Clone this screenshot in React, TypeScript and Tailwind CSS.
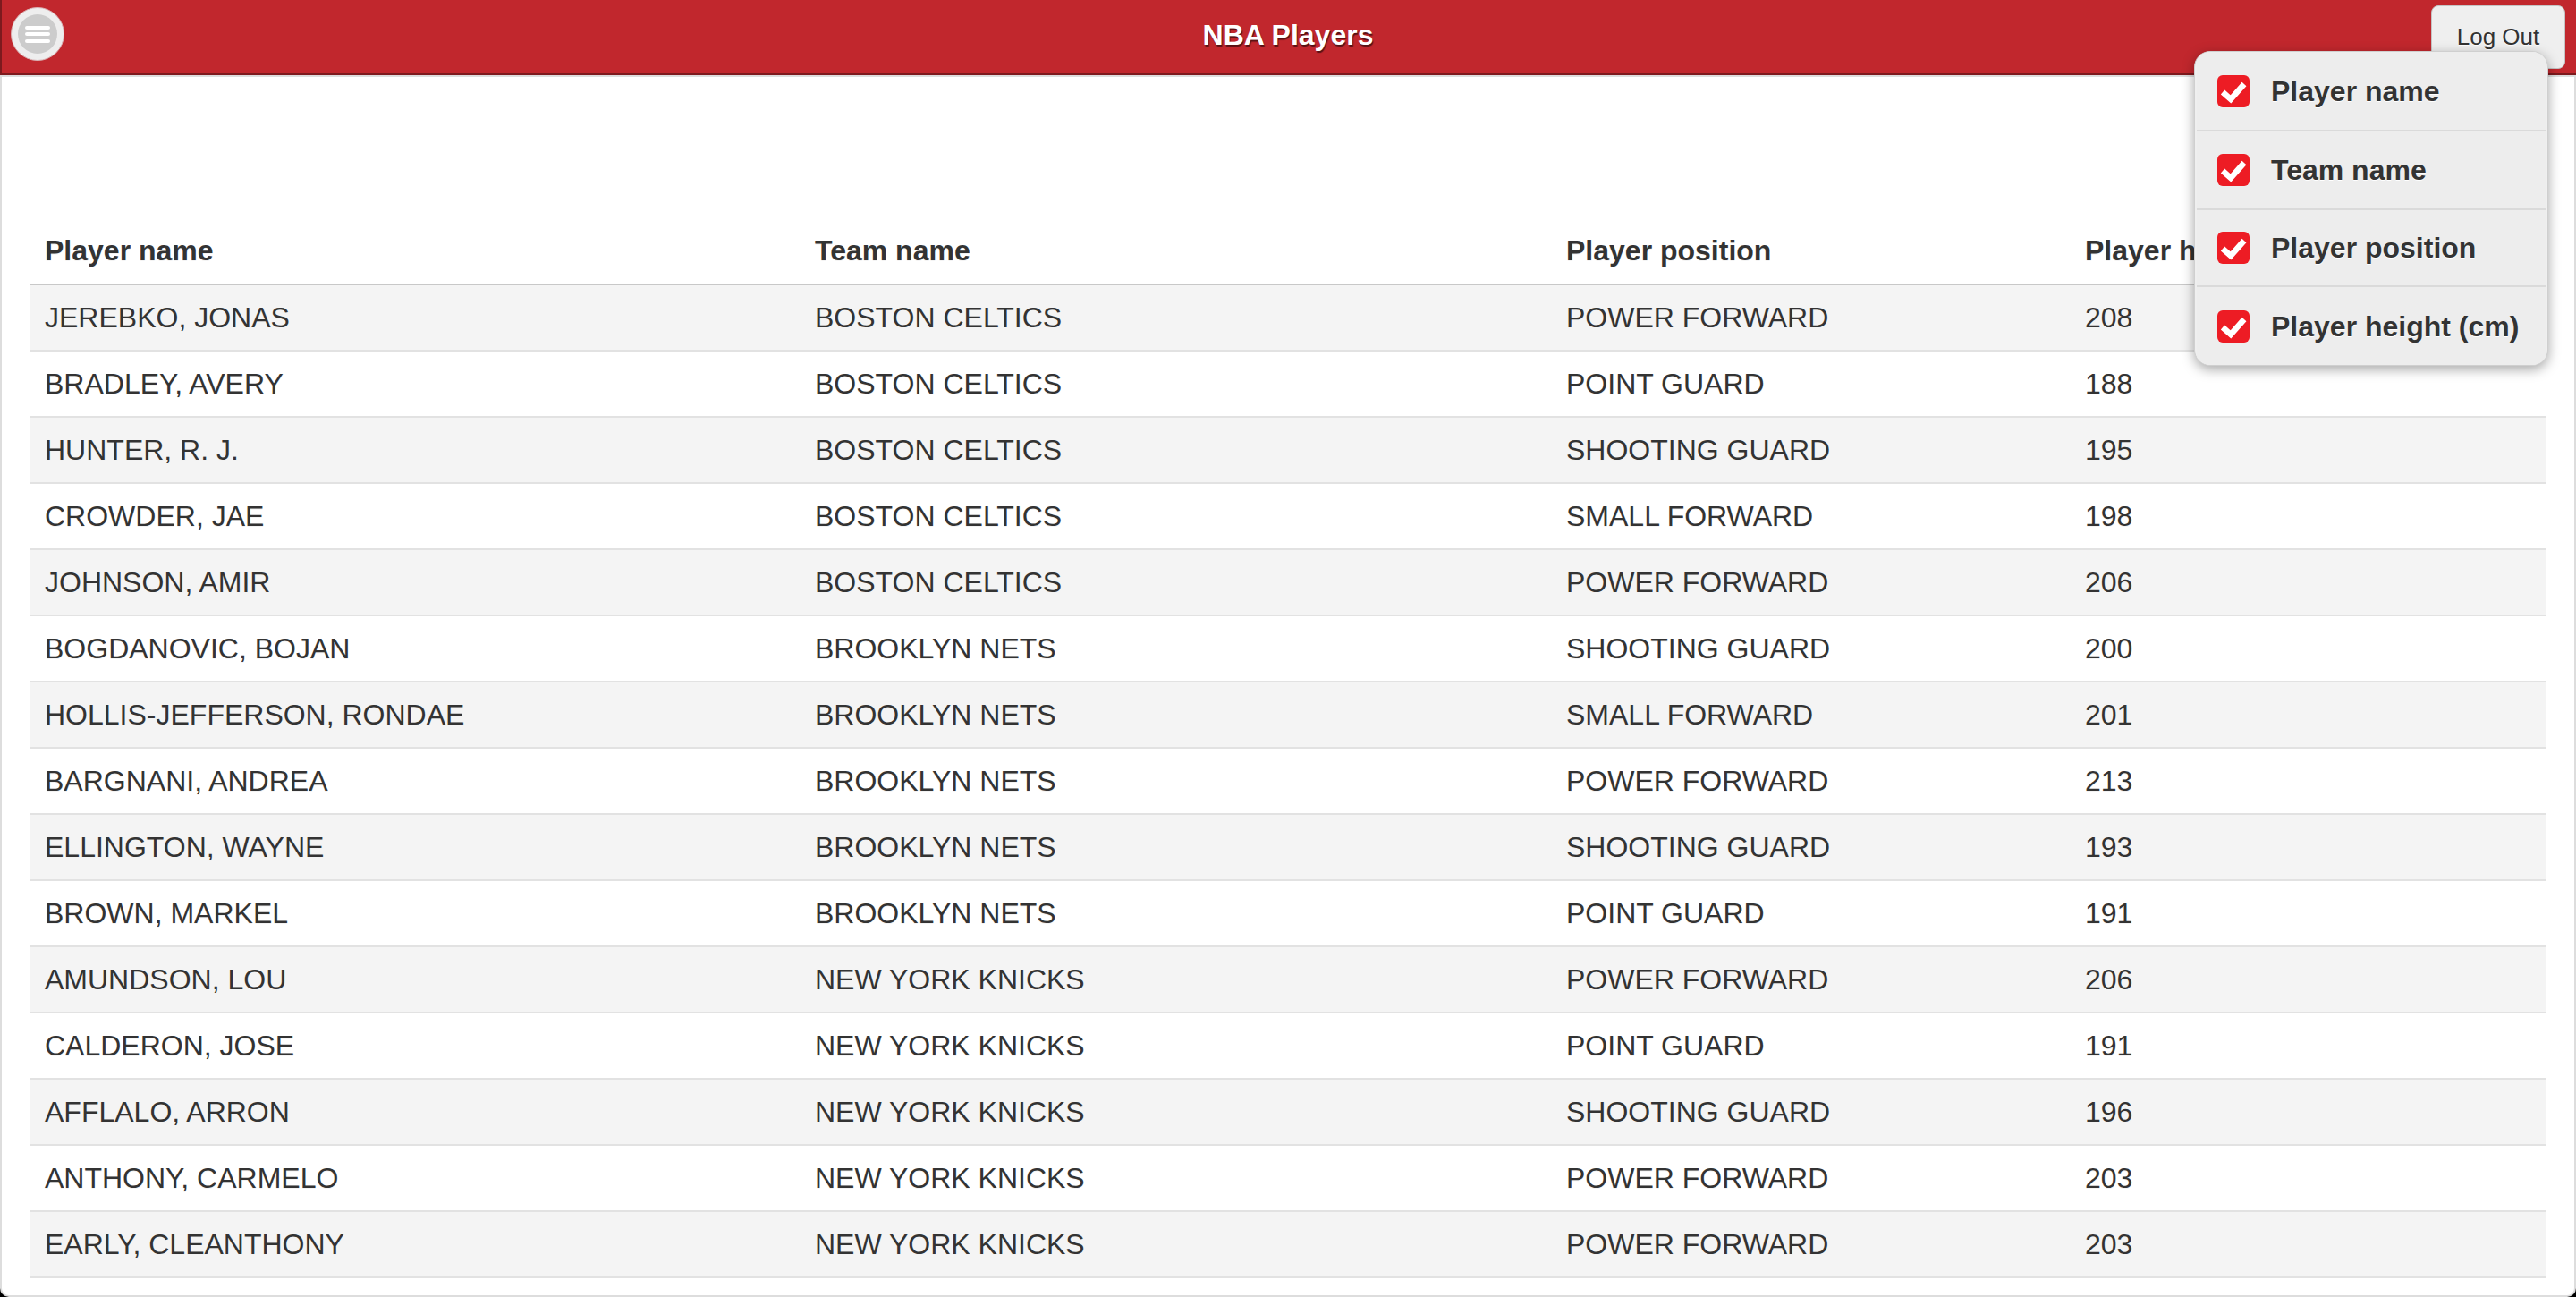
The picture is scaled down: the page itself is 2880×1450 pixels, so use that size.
import React from 'react';

type Player = { name: string; team: string; position: string; height: number };

const players: Player[] = [
    { name: 'JEREBKO, JONAS', team: 'BOSTON CELTICS', position: 'POWER FORWARD', height: 208 },
    { name: 'BRADLEY, AVERY', team: 'BOSTON CELTICS', position: 'POINT GUARD', height: 188 },
    { name: 'HUNTER, R. J.', team: 'BOSTON CELTICS', position: 'SHOOTING GUARD', height: 195 },
    { name: 'CROWDER, JAE', team: 'BOSTON CELTICS', position: 'SMALL FORWARD', height: 198 },
    { name: 'JOHNSON, AMIR', team: 'BOSTON CELTICS', position: 'POWER FORWARD', height: 206 },
    { name: 'BOGDANOVIC, BOJAN', team: 'BROOKLYN NETS', position: 'SHOOTING GUARD', height: 200 },
    { name: 'HOLLIS-JEFFERSON, RONDAE', team: 'BROOKLYN NETS', position: 'SMALL FORWARD', height: 201 },
    { name: 'BARGNANI, ANDREA', team: 'BROOKLYN NETS', position: 'POWER FORWARD', height: 213 },
    { name: 'ELLINGTON, WAYNE', team: 'BROOKLYN NETS', position: 'SHOOTING GUARD', height: 193 },
    { name: 'BROWN, MARKEL', team: 'BROOKLYN NETS', position: 'POINT GUARD', height: 191 },
    { name: 'AMUNDSON, LOU', team: 'NEW YORK KNICKS', position: 'POWER FORWARD', height: 206 },
    { name: 'CALDERON, JOSE', team: 'NEW YORK KNICKS', position: 'POINT GUARD', height: 191 },
    { name: 'AFFLALO, ARRON', team: 'NEW YORK KNICKS', position: 'SHOOTING GUARD', height: 196 },
    { name: 'ANTHONY, CARMELO', team: 'NEW YORK KNICKS', position: 'POWER FORWARD', height: 203 },
    { name: 'EARLY, CLEANTHONY', team: 'NEW YORK KNICKS', position: 'POWER FORWARD', height: 203 },
];

const columns = ['Player name', 'Team name', 'Player position', 'Player height (cm)'];

// the column menu rows are not all the same height in the picture
const menuRowHeights = ['h-[87px]', 'h-[88px]', 'h-[86px]', 'h-[89px]'];

const gridCols = 'grid grid-cols-[861px_840px_580px_531px]';

function MenuButton() {
    return (
        <button className="w-[60px] h-[60px] rounded-full bg-[#eeeeee] border border-[#d9b3b5] flex items-center justify-center -mt-[2px]">
            <span className="w-[44px] h-[44px] rounded-full bg-[#cccccc] flex flex-col items-center justify-center gap-[3.5px]">
                <span className="block w-[28px] h-[4px] rounded-full bg-white" />
                <span className="block w-[28px] h-[4px] rounded-full bg-white" />
                <span className="block w-[28px] h-[4px] rounded-full bg-white" />
            </span>
        </button>
    );
}

function CheckBox() {
    return (
        <span className="w-[36px] h-[36px] rounded-[6px] bg-[#ed1c24] flex items-center justify-center shrink-0">
            <svg width="36" height="36" viewBox="0 0 36 36">
                <path d="M6 19 L15 27 L30 10" fill="none" stroke="white" strokeWidth="6.5" strokeLinejoin="miter" />
            </svg>
        </span>
    );
}

function ColumnMenu() {
    return (
        <div className="absolute left-[2453px] top-[57px] w-[396px] h-[352px] rounded-[18px] bg-[#efefef] border border-[#cfcfcf] px-[2px] shadow-[0_4px_14px_rgba(0,0,0,0.35)] overflow-hidden">
            {columns.map((c, i) => (
                <div
                    key={c}
                    className={
                        menuRowHeights[i] +
                        ' flex items-center gap-[24px] pl-[23px] bg-[#ededed] ' +
                        (i > 0 ? 'border-t-2 border-[#dadada]' : '')
                    }
                >
                    <CheckBox />
                    <span className="text-[32px] font-bold text-[#333] [text-shadow:0_1px_0_#fff]">{c}</span>
                </div>
            ))}
        </div>
    );
}

export default function App() {
    return (
        <div className="relative w-[2880px] h-[1450px] bg-black flex flex-col font-['Liberation_Sans',Arial,sans-serif]">
            <header className="h-[84px] shrink-0 bg-[#c1272d] border-b-2 border-l-2 border-[#7d1a1e] grid grid-cols-[1fr_auto_1fr] items-center pb-[4px] pl-[10px] pr-[12px]">
                <div className="flex">
                    <MenuButton />
                </div>
                <h1 className="text-[32px] font-bold text-white [text-shadow:1px_2px_1px_rgba(0,0,0,0.55)]">NBA Players</h1>
                <div className="flex justify-end">
                    <button className="w-[150px] h-[71px] rounded-[8px] border border-[#c4c4c4] bg-[#efefef] text-[26px] text-[#333] [text-shadow:0_1px_0_#fff] mt-[4px]">
                        Log Out
                    </button>
                </div>
            </header>

            <main className="flex-1 bg-white border-x-2 border-y-2 border-[#dddddd] rounded-b-[10px] pt-[157px] px-[32px] text-[#333] [text-shadow:0_1px_0_#f3f3f3]">
                <div className={gridCols + ' h-[76px] items-center border-b-2 border-[#c8c8c8] text-[32px] font-bold'}>
                    {columns.map((c) => (
                        <div key={c} className="px-[16px] whitespace-nowrap overflow-hidden">
                            {c}
                        </div>
                    ))}
                </div>
                {players.map((p, i) => (
                    <div
                        key={p.name}
                        className={
                            gridCols +
                            ' h-[74px] items-center border-b-2 border-[#e2e2e2] text-[32px] ' +
                            (i % 2 === 0 ? 'bg-[#f4f4f4]' : 'bg-white')
                        }
                    >
                        <div className="px-[16px]">{p.name}</div>
                        <div className="px-[16px]">{p.team}</div>
                        <div className="px-[16px]">{p.position}</div>
                        <div className="px-[16px]">{p.height}</div>
                    </div>
                ))}
            </main>

            <ColumnMenu />
        </div>
    );
}
